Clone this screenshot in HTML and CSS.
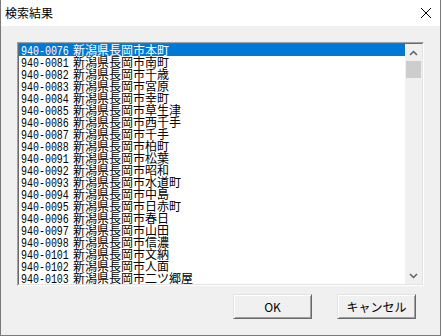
FILE: index.html
```html
<!DOCTYPE html>
<html lang="ja">
<head>
<meta charset="UTF-8" />
<title>検索結果</title>
<link rel="stylesheet" href="styles.css">
</head>
<body>
<div class="window">
    <div class="titlebar">
        <span class="title">検索結果</span>
        <svg class="close" width="12" height="12" viewBox="0 0 12 12">
            <path d="M1 1 L11 11 M11 1 L1 11" stroke="#000" stroke-width="1" fill="none" />
        </svg>
    </div>
    <div class="content">
        <div class="listbox">
            <div class="listbox-inner">
                <ul class="rows">
                    <li class="selected"><span class="code">940-0076</span>新潟県長岡市本町</li>
                    <li><span class="code">940-0081</span>新潟県長岡市南町</li>
                    <li><span class="code">940-0082</span>新潟県長岡市千歳</li>
                    <li><span class="code">940-0083</span>新潟県長岡市宮原</li>
                    <li><span class="code">940-0084</span>新潟県長岡市幸町</li>
                    <li><span class="code">940-0085</span>新潟県長岡市草生津</li>
                    <li><span class="code">940-0086</span>新潟県長岡市西千手</li>
                    <li><span class="code">940-0087</span>新潟県長岡市千手</li>
                    <li><span class="code">940-0088</span>新潟県長岡市柏町</li>
                    <li><span class="code">940-0091</span>新潟県長岡市松葉</li>
                    <li><span class="code">940-0092</span>新潟県長岡市昭和</li>
                    <li><span class="code">940-0093</span>新潟県長岡市水道町</li>
                    <li><span class="code">940-0094</span>新潟県長岡市中島</li>
                    <li><span class="code">940-0095</span>新潟県長岡市日赤町</li>
                    <li><span class="code">940-0096</span>新潟県長岡市春日</li>
                    <li><span class="code">940-0097</span>新潟県長岡市山田</li>
                    <li><span class="code">940-0098</span>新潟県長岡市信濃</li>
                    <li><span class="code">940-0101</span>新潟県長岡市文納</li>
                    <li><span class="code">940-0102</span>新潟県長岡市人面</li>
                    <li><span class="code">940-0103</span>新潟県長岡市二ツ郷屋</li>
                </ul>
                <div class="scrollbar">
                    <div class="arrow">
                        <svg width="9" height="6" viewBox="0 0 9 6"><path d="M1 5 L4.5 1.5 L8 5" stroke="#606060" stroke-width="1.5" fill="none" /></svg>
                    </div>
                    <div class="thumb"></div>
                    <div class="track"></div>
                    <div class="arrow">
                        <svg width="9" height="6" viewBox="0 0 9 6"><path d="M1 1 L4.5 4.5 L8 1" stroke="#606060" stroke-width="1.5" fill="none" /></svg>
                    </div>
                </div>
            </div>
        </div>
        <div class="buttons">
            <button class="btn">OK</button>
            <button class="btn">キャンセル</button>
        </div>
    </div>
</div>
</body>
</html>
```

FILE: styles.css
```css
body {
    margin: 0;
    background: #fff;
    font-family: "Noto Sans CJK JP", sans-serif;
    font-size: 12px;
    color: #000;
}
.window {
    width: 439px;
    height: 335px;
    border: 1px solid #7a7a7a;
    border-top: none;
    display: flex;
    flex-direction: column;
}
.titlebar {
    height: 26px;
    background: #fff;
    display: flex;
    align-items: center;
    justify-content: space-between;
    padding: 0 8px 0 4px;
}
.title {
    font-size: 12px;
    line-height: 12px;
}
.content {
    flex: 1;
    background: #f0f0f0;
    padding: 16px 0 0 16px;
}
.listbox {
    width: 405px;
    height: 242px;
    border-top: 1px solid #a0a0a0;
    border-left: 1px solid #a0a0a0;
    border-right: 1px solid #fff;
    border-bottom: 1px solid #fff;
}
.listbox-inner {
    height: 240px;
    border-top: 1px solid #696969;
    border-left: 1px solid #696969;
    border-right: 1px solid #e3e3e3;
    border-bottom: 1px solid #e3e3e3;
    background: #fff;
    display: flex;
}
.rows {
    flex: 1;
    list-style: none;
    margin: 0;
    padding: 0;
    overflow: hidden;
}
.rows li {
    height: 12px;
    line-height: 12px;
    padding-left: 2px;
    white-space: nowrap;
}
.rows li.selected {
    background: #0078d7;
    color: #fff;
}
.code {
    display: inline-block;
    width: 52px;
    font-family: "Liberation Mono", monospace;
    font-size: 12px;
    transform: scaleX(0.83);
    transform-origin: left center;
}
.scrollbar {
    width: 17px;
    background: #f0f0f0;
    display: flex;
    flex-direction: column;
}
.arrow {
    height: 17px;
    display: flex;
    align-items: center;
    justify-content: center;
}
.thumb {
    height: 17px;
    margin: 0 1px;
    background: #cdcdcd;
}
.track {
    flex: 1;
}
.buttons {
    display: flex;
    gap: 25px;
    padding: 8px 0 0 216px;
}
.btn {
    width: 79px;
    height: 25px;
    padding: 0;
    font-family: "Noto Sans CJK JP", sans-serif;
    font-size: 12px;
    color: #000;
    background: #f0f0f0;
    border-top: 1px solid #e3e3e3;
    border-left: 1px solid #e3e3e3;
    border-right: 1px solid #696969;
    border-bottom: 1px solid #696969;
    box-shadow: inset 1px 1px 0 #fff, inset -1px -1px 0 #a0a0a0;
}
```
